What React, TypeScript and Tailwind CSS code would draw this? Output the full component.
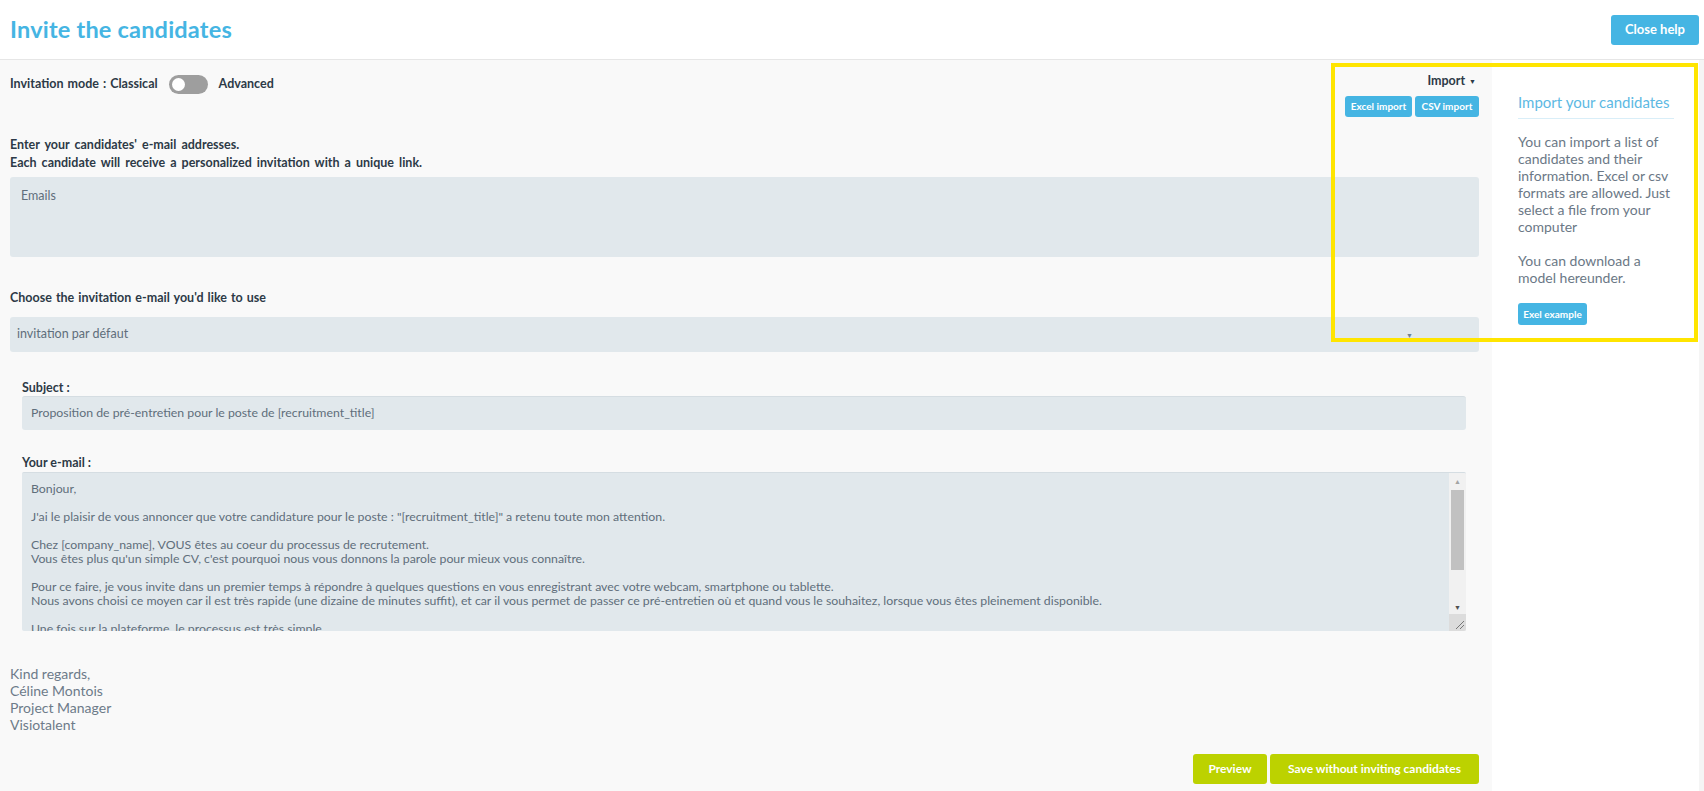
import React from "react";

const emailLines = [
  "Bonjour,",
  "",
  "J'ai le plaisir de vous annoncer que votre candidature pour le poste : \"[recruitment_title]\" a retenu toute mon attention.",
  "",
  "Chez [company_name], VOUS êtes au coeur du processus de recrutement.",
  "Vous êtes plus qu'un simple CV, c'est pourquoi nous vous donnons la parole pour mieux vous connaître.",
  "",
  "Pour ce faire, je vous invite dans un premier temps à répondre à quelques questions en vous enregistrant avec votre webcam, smartphone ou tablette.",
  "Nous avons choisi ce moyen car il est très rapide (une dizaine de minutes suffit), et car il vous permet de passer ce pré-entretien où et quand vous le souhaitez, lorsque vous êtes pleinement disponible.",
  "",
  "Une fois sur la plateforme, le processus est très simple.",
];

function BlueButton({ label, className = "" }: { label: string; className?: string }) {
  return (
    <button
      className={`bg-[#45b5e3] text-white font-bold rounded-[3px] flex items-center justify-center ${className}`}
    >
      {label}
    </button>
  );
}

export default function App() {
  return (
    <div
      className="relative w-full h-[791px] overflow-hidden flex flex-col bg-white text-[#2d3a47]"
      style={{ fontFamily: "Lato, 'Open Sans', sans-serif" }}
    >
      {/* Header */}
      <header className="h-[60px] shrink-0 bg-white border-b border-[#e6e6e6] shadow-[0_1px_2px_rgba(0,0,0,0.04)] flex items-center justify-between pl-[10px] pr-[5px]">
        <h1 className="text-[23.5px] font-bold text-[#45b5e3] tracking-[0.2px]">Invite the candidates</h1>
        <BlueButton label="Close help" className="w-[88px] h-[30px] text-[13px]" />
      </header>

      <div className="flex flex-1 min-h-0">
        {/* Main column */}
        <main className="w-[1492px] shrink-0 bg-[#f9f9f9] pl-[10px] pr-[13px] pt-[13px]">
          <div className="flex justify-between items-start">
            <div className="mt-[2px] h-[19px] flex items-center gap-[11px] text-[12.5px] font-bold">
              <span className="[word-spacing:1px]">Invitation mode : Classical</span>
              <div className="w-[39px] h-[19px] rounded-full bg-[#9e9e9e] p-[3px] flex items-center">
                <div className="w-[13px] h-[13px] rounded-full bg-white" />
              </div>
              <span>Advanced</span>
            </div>
            <div className="flex flex-col items-end">
              <div className="h-[16px] flex items-center gap-[4px] text-[12.5px] font-bold pr-[3px]">
                Import
                <span className="text-[7px]">▼</span>
              </div>
              <div className="mt-[7px] flex gap-[3px]">
                <BlueButton label="Excel import" className="w-[67px] h-[21px] text-[10px]" />
                <BlueButton label="CSV import" className="w-[64px] h-[21px] text-[10px]" />
              </div>
            </div>
          </div>

          <p className="mt-[19px] text-[12.5px] font-bold leading-[18px] [word-spacing:2px]">
            Enter your candidates' e-mail addresses.
            <br />
            Each candidate will receive a personalized invitation with a unique link.
          </p>
          <div className="mt-[5px] h-[80px] bg-[#e1e8ec] rounded-[3px] pl-[11px] pt-[11px] text-[12.5px] leading-[16px] text-[#5f6e7b]">
            Emails
          </div>

          <p className="mt-[33px] text-[12.5px] font-bold leading-[16px] [word-spacing:1px]">
            Choose the invitation e-mail you'd like to use
          </p>
          <div className="mt-[11px] h-[35px] bg-[#e1e8ec] rounded-[3px] pl-[7px] pr-[66px] flex items-center justify-between text-[12.5px] text-[#5f6e7b]">
            <span>invitation par défaut</span>
            <span className="text-[7px] text-[#6f8192] mt-[2px]">▼</span>
          </div>

          <div className="ml-[12px] mr-[13px]">
            <p className="mt-[28px] text-[12.5px] font-bold leading-[16px]">Subject :</p>
            <div className="h-[34px] bg-[#e1e8ec] rounded-[3px] border-t border-[#d5dde2] pl-[9px] flex items-center text-[12.3px] text-[#5f6e7b]">
              Proposition de pré-entretien pour le poste de [recruitment_title]
            </div>

            <p className="mt-[25px] text-[12.5px] font-bold leading-[16px]">Your e-mail :</p>
            <div className="mt-[1px] h-[159px] bg-[#e1e8ec] rounded-[2px] border-t border-[#d5dde2] flex overflow-hidden">
              <div className="flex-1 pl-[9px] pt-[9px] text-[12.3px] leading-[14px] text-[#5f6e7b] overflow-hidden">
                {emailLines.map((l, i) => (
                  <div key={i} className="h-[14px] whitespace-nowrap">
                    {l}
                  </div>
                ))}
              </div>
              {/* scrollbar */}
              <div className="w-[17px] shrink-0 bg-[#f1f1f1] flex flex-col">
                <div className="h-[17px] flex items-center justify-center text-[7px] text-[#a3a3a3]">▲</div>
                <div className="mx-[2px] h-[80px] bg-[#c1c1c1]" />
                <div className="flex-1 flex items-end justify-center pb-[2px] text-[7px] text-[#505050]">▼</div>
                <div className="h-[17px] bg-[#dcdcdc] flex items-end justify-end p-[2px]">
                  <svg width="9" height="9" viewBox="0 0 9 9">
                    <path d="M1 9 L9 1 M5 9 L9 5" stroke="#777" strokeWidth="1" />
                  </svg>
                </div>
              </div>
            </div>
          </div>

          <div className="mt-[34px] text-[14px] leading-[17px] text-[#6d7b89]">
            <div>Kind regards,</div>
            <div>Céline Montois</div>
            <div>Project Manager</div>
            <div>Visiotalent</div>
          </div>

          <div className="mt-[21px] flex justify-end gap-[3px]">
            <button className="w-[74px] h-[30px] rounded-[3px] bg-[#bcd200] text-white text-[12px] font-bold">
              Preview
            </button>
            <button className="w-[209px] h-[30px] rounded-[3px] bg-[#bcd200] text-white text-[12px] font-bold">
              Save without inviting candidates
            </button>
          </div>
        </main>

        {/* Help panel */}
        <aside className="w-[207px] shrink-0 bg-white pl-[26px] pr-[25px] pt-[32px]">
          <h2 className="text-[15px] leading-[20px] text-[#5db9e3]">Import your candidates</h2>
          <div className="mt-[6px] h-[1px] bg-[#d9eef8]" />
          <p className="mt-[14px] text-[14px] leading-[17px] text-[#6b7886]">
            You can import a list of
            <br />
            candidates and their
            <br />
            information. Excel or csv
            <br />
            formats are allowed. Just
            <br />
            select a file from your
            <br />
            computer
            <br />
            <br />
            You can download a
            <br />
            model hereunder.
          </p>
          <BlueButton label="Exel example" className="mt-[17px] w-[69px] h-[22px] text-[10px]" />
        </aside>
        <div className="flex-1 bg-[#f5f5f5]" />
      </div>

      {/* Highlight frame */}
      <div className="absolute left-[1331px] top-[63px] w-[367px] h-[279px] border-[4px] border-[#ffe500] pointer-events-none" />
    </div>
  );
}
